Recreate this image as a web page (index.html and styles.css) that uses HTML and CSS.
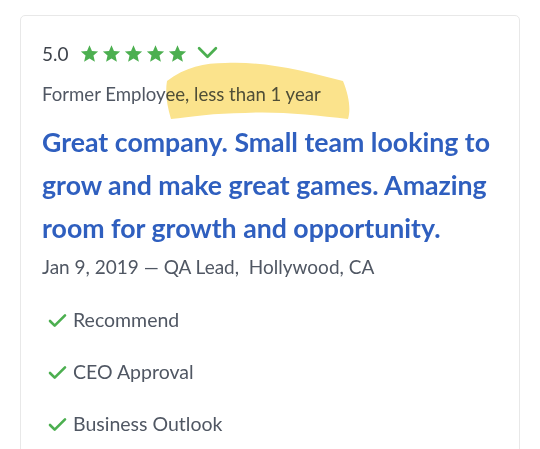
FILE: index.html
```html
<!DOCTYPE html>
<html>
<head>
<meta charset="utf-8">
<link rel="stylesheet" href="styles.css">
</head>
<body>
<div class="card">
  <div class="rating">
    <span class="score">5.0</span>
    <span class="stars">
      <svg class="star" viewBox="0 0 24 24"><path d="M12 1.5l3.1 7.2 7.8.7-5.9 5.2 1.8 7.7L12 18.3l-6.8 4 1.8-7.7L1.1 9.4l7.8-.7z"/></svg>
      <svg class="star" viewBox="0 0 24 24"><path d="M12 1.5l3.1 7.2 7.8.7-5.9 5.2 1.8 7.7L12 18.3l-6.8 4 1.8-7.7L1.1 9.4l7.8-.7z"/></svg>
      <svg class="star" viewBox="0 0 24 24"><path d="M12 1.5l3.1 7.2 7.8.7-5.9 5.2 1.8 7.7L12 18.3l-6.8 4 1.8-7.7L1.1 9.4l7.8-.7z"/></svg>
      <svg class="star" viewBox="0 0 24 24"><path d="M12 1.5l3.1 7.2 7.8.7-5.9 5.2 1.8 7.7L12 18.3l-6.8 4 1.8-7.7L1.1 9.4l7.8-.7z"/></svg>
      <svg class="star" viewBox="0 0 24 24"><path d="M12 1.5l3.1 7.2 7.8.7-5.9 5.2 1.8 7.7L12 18.3l-6.8 4 1.8-7.7L1.1 9.4l7.8-.7z"/></svg>
    </span>
    <svg class="chevron" viewBox="0 0 20 14"><path d="M2 3l8 8 8-8" fill="none" stroke="#4caf50" stroke-width="2.6" stroke-linecap="round" stroke-linejoin="round"/></svg>
  </div>
  <div class="status">Former Employee, less than 1 year
    <svg class="highlight" viewBox="0 0 190 60"><path d="M2 20 C20 6 40 2 60 2 C100 0 140 10 178 20 C184 35 186 48 183 58 C150 54 110 50 80 52 C50 52 25 56 6 58 C2 45 0 32 2 20Z" fill="#fbe38c"/></svg>
  </div>
  <h2 class="title">Great company. Small team looking to grow and make great games. Amazing room for growth and opportunity.</h2>
  <div class="meta">Jan 9, 2019 — QA Lead,&nbsp; Hollywood, CA</div>
  <ul class="checks">
    <li><svg class="check" viewBox="0 0 20 16"><path d="M2 8.5l5 5L18 2.5" fill="none" stroke="#4caf50" stroke-width="2.8" stroke-linecap="round" stroke-linejoin="round"/></svg>Recommend</li>
    <li><svg class="check" viewBox="0 0 20 16"><path d="M2 8.5l5 5L18 2.5" fill="none" stroke="#4caf50" stroke-width="2.8" stroke-linecap="round" stroke-linejoin="round"/></svg>CEO Approval</li>
    <li><svg class="check" viewBox="0 0 20 16"><path d="M2 8.5l5 5L18 2.5" fill="none" stroke="#4caf50" stroke-width="2.8" stroke-linecap="round" stroke-linejoin="round"/></svg>Business Outlook</li>
  </ul>
</div>
</body>
</html>
```
FILE: styles.css
```css
html, body {
  margin: 0;
  padding: 0;
  background: #ffffff;
  overflow: hidden;
}
body {
  font-family: Lato, "Open Sans", sans-serif;
  color: #505763;
  height: 449px;
}
.card {
  margin: 15px 0 0 20px;
  width: 500px;
  height: 500px;
  border: 1px solid #e8e8e8;
  border-radius: 5px;
  padding: 22px 0 0 21px;
  box-sizing: border-box;
}
.rating {
  display: flex;
  align-items: center;
  height: 30px;
}
.score {
  font-size: 19px;
  font-weight: 400;
  color: #3f444c;
  margin-right: 11px;
}
.stars {
  display: flex;
  gap: 3px;
}
.star {
  width: 19px;
  height: 19px;
  fill: #4caf50;
}
.chevron {
  width: 21px;
  height: 15px;
  margin-left: 10px;
  margin-top: -2px;
}
.status {
  position: relative;
  font-size: 18.6px;
  line-height: 24px;
  margin-top: 14px;
}
.highlight {
  position: absolute;
  left: 123px;
  top: -21px;
  width: 190px;
  height: 60px;
  mix-blend-mode: multiply;
}
.title {
  margin: 15px 0 0 0;
  font-size: 26.7px;
  font-weight: 700;
  line-height: 43px;
  color: #2f5fbf;
  width: 475px;
}
.meta {
  font-size: 19px;
  line-height: 24px;
  margin-top: 5px;
}
.checks {
  list-style: none;
  margin: 29px 0 0 0;
  padding: 0 0 0 6px;
}
.checks li {
  display: flex;
  align-items: center;
  font-size: 19.5px;
  line-height: 24px;
  height: 24px;
  margin-bottom: 28px;
}
.check {
  width: 19px;
  height: 15px;
  margin-right: 6px;
}
```
